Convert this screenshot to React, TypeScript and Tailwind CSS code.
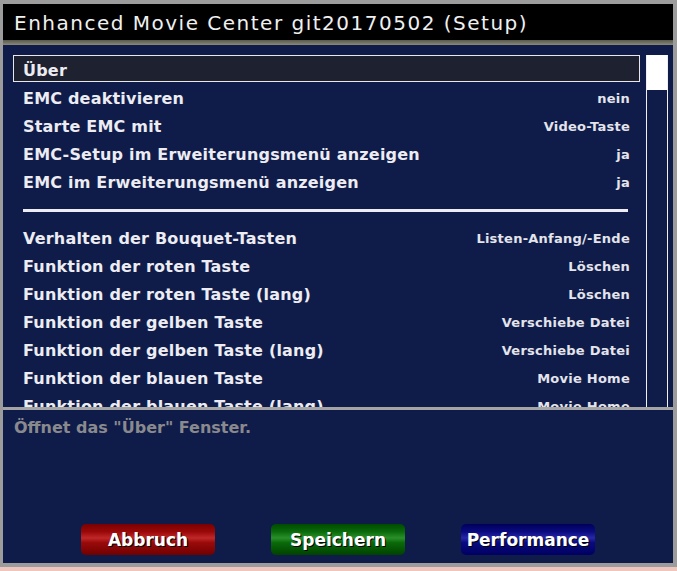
import React from "react";

type Row = { label: string; value?: string; divider?: boolean; selected?: boolean };

const rows: Row[] = [
  { label: "Über", selected: true },
  { label: "EMC deaktivieren", value: "nein" },
  { label: "Starte EMC mit", value: "Video-Taste" },
  { label: "EMC-Setup im Erweiterungsmenü anzeigen", value: "ja" },
  { label: "EMC im Erweiterungsmenü anzeigen", value: "ja" },
  { label: "", divider: true },
  { label: "Verhalten der Bouquet-Tasten", value: "Listen-Anfang/-Ende" },
  { label: "Funktion der roten Taste", value: "Löschen" },
  { label: "Funktion der roten Taste (lang)", value: "Löschen" },
  { label: "Funktion der gelben Taste", value: "Verschiebe Datei" },
  { label: "Funktion der gelben Taste (lang)", value: "Verschiebe Datei" },
  { label: "Funktion der blauen Taste", value: "Movie Home" },
  { label: "Funktion der blauen Taste (lang)", value: "Movie Home" },
];

const font = { fontFamily: '"DejaVu Sans", "Liberation Sans", sans-serif' };

function Btn({ label, cls }: { label: string; cls: string }) {
  return (
    <div
      className={`w-[134px] h-[31px] rounded-[5px] flex items-center justify-center pt-[3px] text-[17px] font-bold text-white [text-shadow:1px_1px_0_#000] ${cls}`}
    >
      {label}
    </div>
  );
}

export default function App() {
  return (
    <div className="w-[677px] h-[571px] bg-[#eec6be] flex flex-col" style={font}>
      <div className="h-[567px] flex flex-col border-t-[4px] border-l-[3px] border-r-[4px] border-b-[4px] border-[#9c9c9c] bg-[#0f1c4a]">
        <div className="h-[36px] shrink-0 bg-black flex items-center pl-[11px] pt-[1px] text-[20px] text-[#f0f0f0] tracking-[1.5px]">
          Enhanced Movie Center git20170502 (Setup)
        </div>
        <div className="h-[5px] shrink-0 bg-gradient-to-b from-[#5a5a4c] to-[#8a8a7c]" />
        <div className="h-[362px] shrink-0 flex pt-[10px] overflow-hidden">
          <div className="ml-[10px] w-[627px] flex flex-col">
            {rows.map((r, i) =>
              r.divider ? (
                <div key={i} className="h-[28px] flex items-center pl-[10px] pr-[12px] shrink-0">
                  <div className="w-full h-[3px] bg-[#ececf2] mt-[3px]" />
                </div>
              ) : (
                <div
                  key={i}
                  className={`shrink-0 flex items-center justify-between pr-[10px] pt-[4px] ${
                    r.selected
                      ? "bg-[#1d2130] border border-[#e8e8e8] h-[27px] mb-[1px] pl-[9px]"
                      : "h-[28px] pl-[10px]"
                  }`}
                >
                  <span className="text-[16px] font-bold text-[#ececf2] whitespace-nowrap tracking-[0.2px]">
                    {r.label}
                  </span>
                  {r.value && (
                    <span className="text-[13px] font-bold text-[#e4e4ec] whitespace-nowrap tracking-[0.25px]">
                      {r.value}
                    </span>
                  )}
                </div>
              )
            )}
          </div>
          <div className="ml-[6px] w-[22px] border-l border-r border-[#f0f0f0] flex flex-col">
            <div className="h-[35px] bg-white" />
          </div>
        </div>
        <div className="h-[3px] shrink-0 bg-[#a4a4a4]" />
        <div className="flex-1 flex flex-col">
          <div className="pl-[11px] pt-[6px] text-[16px] font-bold text-[#8a8a8e]">
            Öffnet das "Über" Fenster.
          </div>
          <div className="mt-auto mb-[8px] flex pl-[78px] gap-[56px]">
            <Btn
              label="Abbruch"
              cls="bg-[linear-gradient(to_bottom,#7a0000_0%,#9a0808_25%,#c02828_45%,#9a0a0a_60%,#700000_100%)]"
            />
            <Btn
              label="Speichern"
              cls="bg-[linear-gradient(to_bottom,#004a00_0%,#0a6a0a_25%,#2a902a_45%,#0a6a0a_60%,#004200_100%)]"
            />
            <Btn
              label="Performance"
              cls="bg-[linear-gradient(to_bottom,#00005a_0%,#0a0a80_25%,#2828a8_45%,#0a0a80_60%,#000060_100%)]"
            />
          </div>
        </div>
      </div>
    </div>
  );
}
